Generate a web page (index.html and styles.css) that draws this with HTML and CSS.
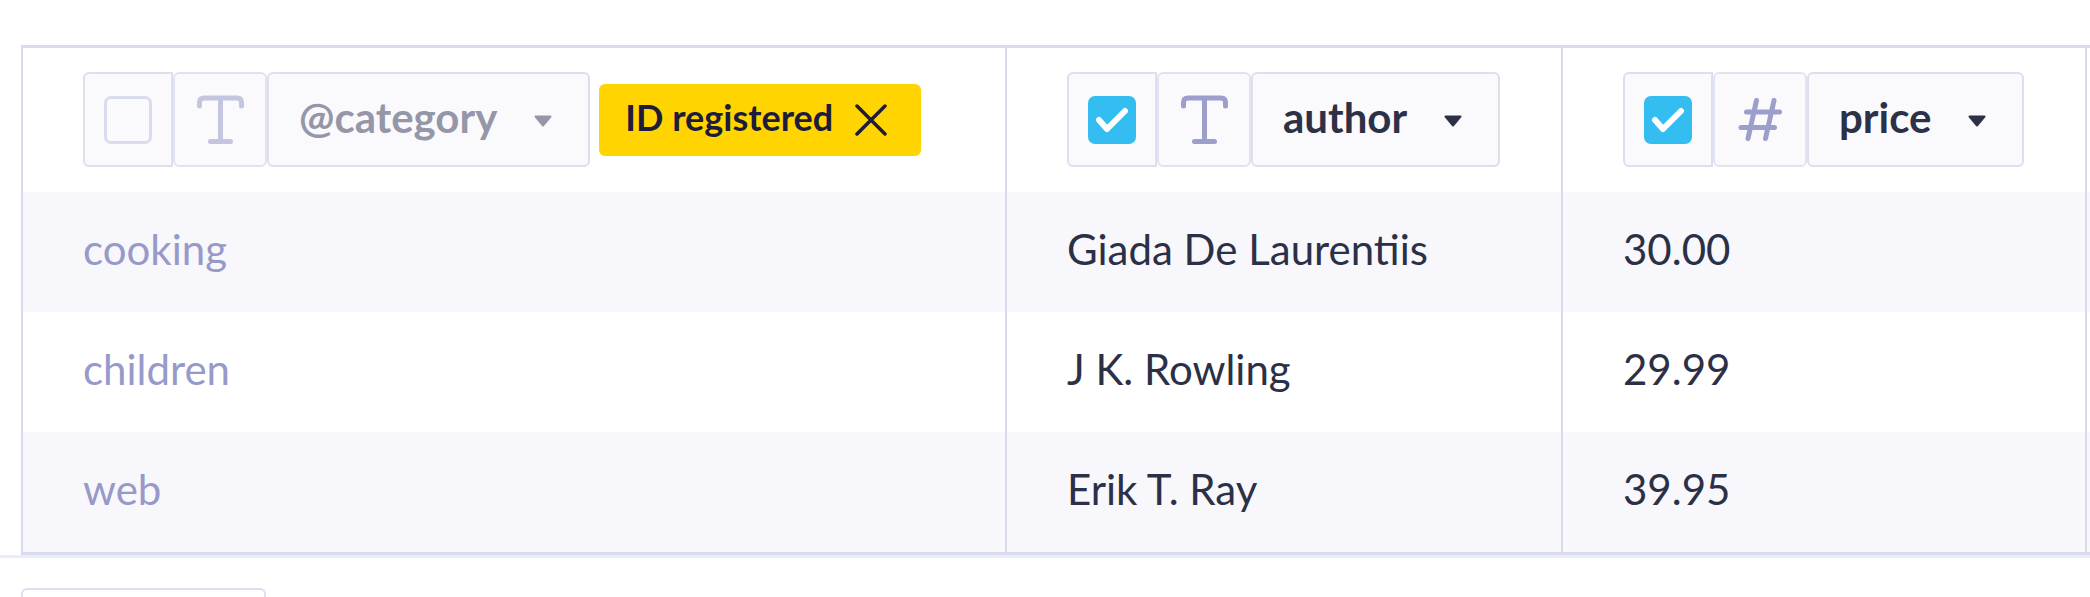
FILE: index.html
```html
<!DOCTYPE html>
<html lang="en">
<head>
<meta charset="utf-8">
<title>Table</title>
<link rel="stylesheet" href="styles.css">
</head>
<body>
<div class="scroller">
  <div class="grid">
    <div class="cell head">
      <div class="group">
        <div class="seg seg-check">
          <span class="box"></span>
        </div>
        <div class="seg seg-type seg-type-light">
          <svg class="icon-t" width="47" height="50" viewBox="0 0 47 50"><path d="M2.5 11 V7.5 Q2.5 3 7 3 H40 Q44.5 3 44.5 7.5 V11 M23.5 3 V46.5 M13.5 46.5 H33.5" fill="none" stroke="currentColor" stroke-width="5" stroke-linecap="round" stroke-linejoin="round"/></svg>
        </div>
        <div class="seg seg-drop muted">
          <span class="name">@category</span>
          <svg class="caret" width="18" height="12" viewBox="0 0 18 12"><path d="M1.5 1.5 H16.5 L9 10.5 Z" fill="currentColor" stroke="currentColor" stroke-width="2" stroke-linejoin="round"/></svg>
        </div>
      </div>
      <div class="badge">
        <span class="label">ID registered</span>
        <svg class="x" width="32" height="32" viewBox="0 0 32 32"><path d="M2 2 L30 30 M30 2 L2 30" stroke="currentColor" stroke-width="3.5" stroke-linecap="round"/></svg>
      </div>
    </div>
    <div class="cell head">
      <div class="group">
        <div class="seg seg-check">
          <span class="box on"><svg width="48" height="48" viewBox="0 0 48 48"><path d="M11 24 L19 33 L37 15" fill="none" stroke="#fff" stroke-width="6" stroke-linecap="round" stroke-linejoin="round"/></svg></span>
        </div>
        <div class="seg seg-type">
          <svg class="icon-t" width="47" height="50" viewBox="0 0 47 50"><path d="M2.5 11 V7.5 Q2.5 3 7 3 H40 Q44.5 3 44.5 7.5 V11 M23.5 3 V46.5 M13.5 46.5 H33.5" fill="none" stroke="currentColor" stroke-width="5" stroke-linecap="round" stroke-linejoin="round"/></svg>
        </div>
        <div class="seg seg-drop">
          <span class="name">author</span>
          <svg class="caret" width="18" height="12" viewBox="0 0 18 12"><path d="M1.5 1.5 H16.5 L9 10.5 Z" fill="currentColor" stroke="currentColor" stroke-width="2" stroke-linejoin="round"/></svg>
        </div>
      </div>
    </div>
    <div class="cell head">
      <div class="group">
        <div class="seg seg-check">
          <span class="box on"><svg width="48" height="48" viewBox="0 0 48 48"><path d="M11 24 L19 33 L37 15" fill="none" stroke="#fff" stroke-width="6" stroke-linecap="round" stroke-linejoin="round"/></svg></span>
        </div>
        <div class="seg seg-type">
          <svg class="icon-hash" width="45" height="43" viewBox="0 0 45 43"><path d="M8.5 14 H41.5 M3 29.5 H36.5 M18.5 2.5 L10 40.5 M36 2.5 L27.5 40.5" fill="none" stroke="currentColor" stroke-width="5" stroke-linecap="round"/></svg>
        </div>
        <div class="seg seg-drop">
          <span class="name">price</span>
          <svg class="caret" width="18" height="12" viewBox="0 0 18 12"><path d="M1.5 1.5 H16.5 L9 10.5 Z" fill="currentColor" stroke="currentColor" stroke-width="2" stroke-linejoin="round"/></svg>
        </div>
      </div>
    </div>
    <div class="cell head"></div>

    <div class="row alt">
      <div class="cell cat">cooking</div>
      <div class="cell">Giada De Laurentiis</div>
      <div class="cell">30.00</div>
      <div class="cell"></div>
    </div>
    <div class="row">
      <div class="cell cat">children</div>
      <div class="cell">J K. Rowling</div>
      <div class="cell">29.99</div>
      <div class="cell"></div>
    </div>
    <div class="row alt">
      <div class="cell cat">web</div>
      <div class="cell">Erik T. Ray</div>
      <div class="cell">39.95</div>
      <div class="cell"></div>
    </div>
  </div>
</div>
<div class="footer">
  <div class="footer-btn"></div>
</div>
</body>
</html>
```

FILE: styles.css
```css
html, body {
  margin: 0;
  padding: 0;
  background: #ffffff;
  height: 597px;
  overflow: hidden;
}

body {
  font-family: Lato, "Open Sans", "Liberation Sans", sans-serif;
  color: #2c3046;
}

.scroller {
  padding: 45px 0 0 21px;
  border-bottom: 3px solid #eaecf7;
  overflow: hidden;
}

.grid {
  display: grid;
  grid-template-columns: 984px 556px 524px 300px;
  width: max-content;
  border-left: 2px solid #d8dcee;
  border-top: 3px solid #d8dcee;
  border-bottom: 3px solid #d8dcee;
}

.row {
  display: contents;
}

.cell {
  box-sizing: border-box;
  height: 120px;
  padding: 0 60px 6px;
  display: flex;
  align-items: center;
  border-right: 2px solid #d8dcee;
  font-size: 42px;
  background: #ffffff;
}

.row.alt .cell {
  background: #f7f7fc;
}

.cell.cat {
  color: #979ac9;
}

.cell.head {
  height: 144px;
  padding-top: 24px;
  padding-bottom: 25px;
}

.group {
  display: flex;
  height: 95px;
}

.seg {
  box-sizing: border-box;
  height: 95px;
  display: flex;
  align-items: center;
  justify-content: center;
  background: #fafafd;
  border: 2px solid #dcdfef;
  border-radius: 6px;
}

.seg-check {
  width: 90px;
  border-radius: 6px 0 0 6px;
}

.seg-type {
  width: 94px;
  color: #9c9ecb;
  border-color: #e1e3f2;
}

.seg-type-light {
  color: #c4c6e0;
}

.box {
  box-sizing: border-box;
  width: 48px;
  height: 48px;
  border: 3px solid #d9dcef;
  border-radius: 7px;
  background: #fafafd;
  display: block;
}

.box.on {
  border: 0;
  background: #33bdf0;
}

.box svg {
  display: block;
}

.icon-t {
  margin-left: 1px;
}

.seg-drop {
  padding: 0 36px 0 30px;
  gap: 37px;
  font-size: 42px;
  font-weight: 700;
  color: #2c3148;
}

.seg-drop .name {
  margin-bottom: 6px;
}

.seg-drop.muted {
  color: #9597a8;
}

.caret {
  display: block;
  margin-top: 2px;
}

.badge {
  margin-left: 9px;
  height: 72px;
  box-sizing: border-box;
  display: flex;
  align-items: center;
  gap: 22px;
  padding: 0 34px 0 26px;
  background: #ffd400;
  border-radius: 6px;
  font-size: 36px;
  font-weight: 700;
  color: #1d1c3a;
}

.badge .label {
  margin-bottom: 6px;
}

.badge .x {
  display: block;
}

.footer {
  padding: 30px 0 0 21px;
}

.footer-btn {
  box-sizing: border-box;
  width: 245px;
  height: 9px;
  border: 2px solid #dcdfef;
  border-bottom: 0;
  border-radius: 6px 6px 0 0;
  background: #ffffff;
}
```
